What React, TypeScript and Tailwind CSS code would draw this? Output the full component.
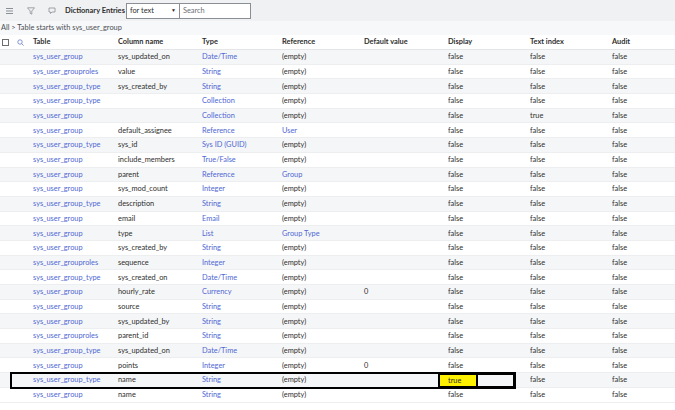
import React from 'react';

const rows: [string, string, string, string, string, string, string][] = [
  ['sys_user_group', 'sys_updated_on', 'Date/Time', '(empty)', '', 'false', 'false'],
  ['sys_user_grouproles', 'value', 'String', '(empty)', '', 'false', 'false'],
  ['sys_user_group_type', 'sys_created_by', 'String', '(empty)', '', 'false', 'false'],
  ['sys_user_group_type', '', 'Collection', '(empty)', '', 'false', 'false'],
  ['sys_user_group', '', 'Collection', '(empty)', '', 'false', 'true'],
  ['sys_user_group', 'default_assignee', 'Reference', 'User', '', 'false', 'false'],
  ['sys_user_group_type', 'sys_id', 'Sys ID (GUID)', '(empty)', '', 'false', 'false'],
  ['sys_user_group', 'include_members', 'True/False', '(empty)', '', 'false', 'false'],
  ['sys_user_group', 'parent', 'Reference', 'Group', '', 'false', 'false'],
  ['sys_user_group', 'sys_mod_count', 'Integer', '(empty)', '', 'false', 'false'],
  ['sys_user_group_type', 'description', 'String', '(empty)', '', 'false', 'false'],
  ['sys_user_group', 'email', 'Email', '(empty)', '', 'false', 'false'],
  ['sys_user_group', 'type', 'List', 'Group Type', '', 'false', 'false'],
  ['sys_user_group', 'sys_created_by', 'String', '(empty)', '', 'false', 'false'],
  ['sys_user_grouproles', 'sequence', 'Integer', '(empty)', '', 'false', 'false'],
  ['sys_user_group_type', 'sys_created_on', 'Date/Time', '(empty)', '', 'false', 'false'],
  ['sys_user_group', 'hourly_rate', 'Currency', '(empty)', '0', 'false', 'false'],
  ['sys_user_group', 'source', 'String', '(empty)', '', 'false', 'false'],
  ['sys_user_group', 'sys_updated_by', 'String', '(empty)', '', 'false', 'false'],
  ['sys_user_grouproles', 'parent_id', 'String', '(empty)', '', 'false', 'false'],
  ['sys_user_group_type', 'sys_updated_on', 'Date/Time', '(empty)', '', 'false', 'false'],
  ['sys_user_group', 'points', 'Integer', '(empty)', '0', 'false', 'false'],
  ['sys_user_group_type', 'name', 'String', '(empty)', '', 'true', 'false'],
  ['sys_user_group', 'name', 'String', '(empty)', '', 'false', 'false'],
];

const cols = 'grid grid-cols-[33px_85px_84px_80px_82px_84px_82px_82px_1fr] items-center';
const refLinks = ['User', 'Group', 'Group Type'];

export default function App() {
  return (
    <div className="relative h-[410px] w-[675px] overflow-hidden bg-white text-[7.4px] text-[#2e2e2e]" style={{ fontFamily: 'Lato, "Liberation Sans", sans-serif' }}>
      <div className="flex h-[21px] items-center gap-[9px] bg-[#f0f1f3] pl-[6px]">
        <svg width="7" height="6" viewBox="0 0 7 6"><path d="M0 .5h7M0 3h7M0 5.5h7" stroke="#8a8f96" strokeWidth="1" /></svg>
        <svg width="8" height="8" viewBox="0 0 8 8" className="ml-[5px]"><path d="M.5 .8h7L4.8 4v3.2L3.2 6.3V4z" fill="none" stroke="#8a8f96" strokeWidth=".8" /></svg>
        <svg width="8" height="8" viewBox="0 0 8 8" className="ml-[4px]"><path d="M1 1h6v4H4L2.5 6.5V5H1z" fill="none" stroke="#8a8f96" strokeWidth=".8" /></svg>
        <span className="text-[7.5px] font-bold">Dictionary Entries</span>
        <div className="-ml-[8px] flex h-[16px] items-center">
          <div className="flex h-full w-[54px] items-center justify-between border border-[#8a8f96] bg-white px-[3px]">
            <span>for text</span><span className="text-[5px]">▼</span>
          </div>
          <div className="flex h-full w-[71px] items-center border border-l-0 border-[#8a8f96] bg-white px-[3px] text-[#6b6f74]">Search</div>
        </div>
      </div>
      <div className="flex h-[14px] items-center bg-[#f7f8f9] pl-[1px] text-[#4a4e54]">All &gt; Table starts with sys_user_group</div>
      <div className={`${cols} h-[15px] border-b border-[#e3e5e8] font-bold`}>
        <div className="flex items-center gap-[8px] pl-[2px]">
          <span className="h-[7px] w-[7px] border border-[#6b6f74] bg-white" />
          <svg width="7" height="7" viewBox="0 0 7 7"><circle cx="3" cy="3" r="2.2" fill="none" stroke="#6b7cc4" strokeWidth=".8" /><path d="M4.6 4.6L6.6 6.6" stroke="#6b7cc4" strokeWidth=".8" /></svg>
        </div>
        <div>Table</div><div>Column name</div><div>Type</div><div>Reference</div><div>Default value</div><div>Display</div><div>Text index</div><div>Audit</div>
      </div>
      {rows.map((r, i) => (
        <div key={i} className={`${cols} h-[14.7px] border-b border-[#eceef0] ${i % 2 === 0 ? 'bg-[#f5f6f7]' : 'bg-white'}`}>
          <div />
          <div className="text-[#5068d4]">{r[0]}</div>
          <div>{r[1]}</div>
          <div className="text-[#5068d4]">{r[2]}</div>
          <div className={refLinks.includes(r[3]) ? 'text-[#5068d4]' : ''}>{r[3]}</div>
          <div>{r[4]}</div>
          <div>{r[5]}</div>
          <div>{r[6]}</div>
          <div>false</div>
        </div>
      ))}
      <div className="absolute left-[10px] top-[372px] h-[17px] w-[506px] border-2 border-black" />
      <div className="absolute left-[438px] top-[373px] flex h-[15px] w-[40px] items-center border-2 border-black bg-[#fff200] pl-[8px]">true</div>
      <div className="absolute left-[476px] top-[373px] h-[15px] w-[39px] border-2 border-black" />
    </div>
  );
}
